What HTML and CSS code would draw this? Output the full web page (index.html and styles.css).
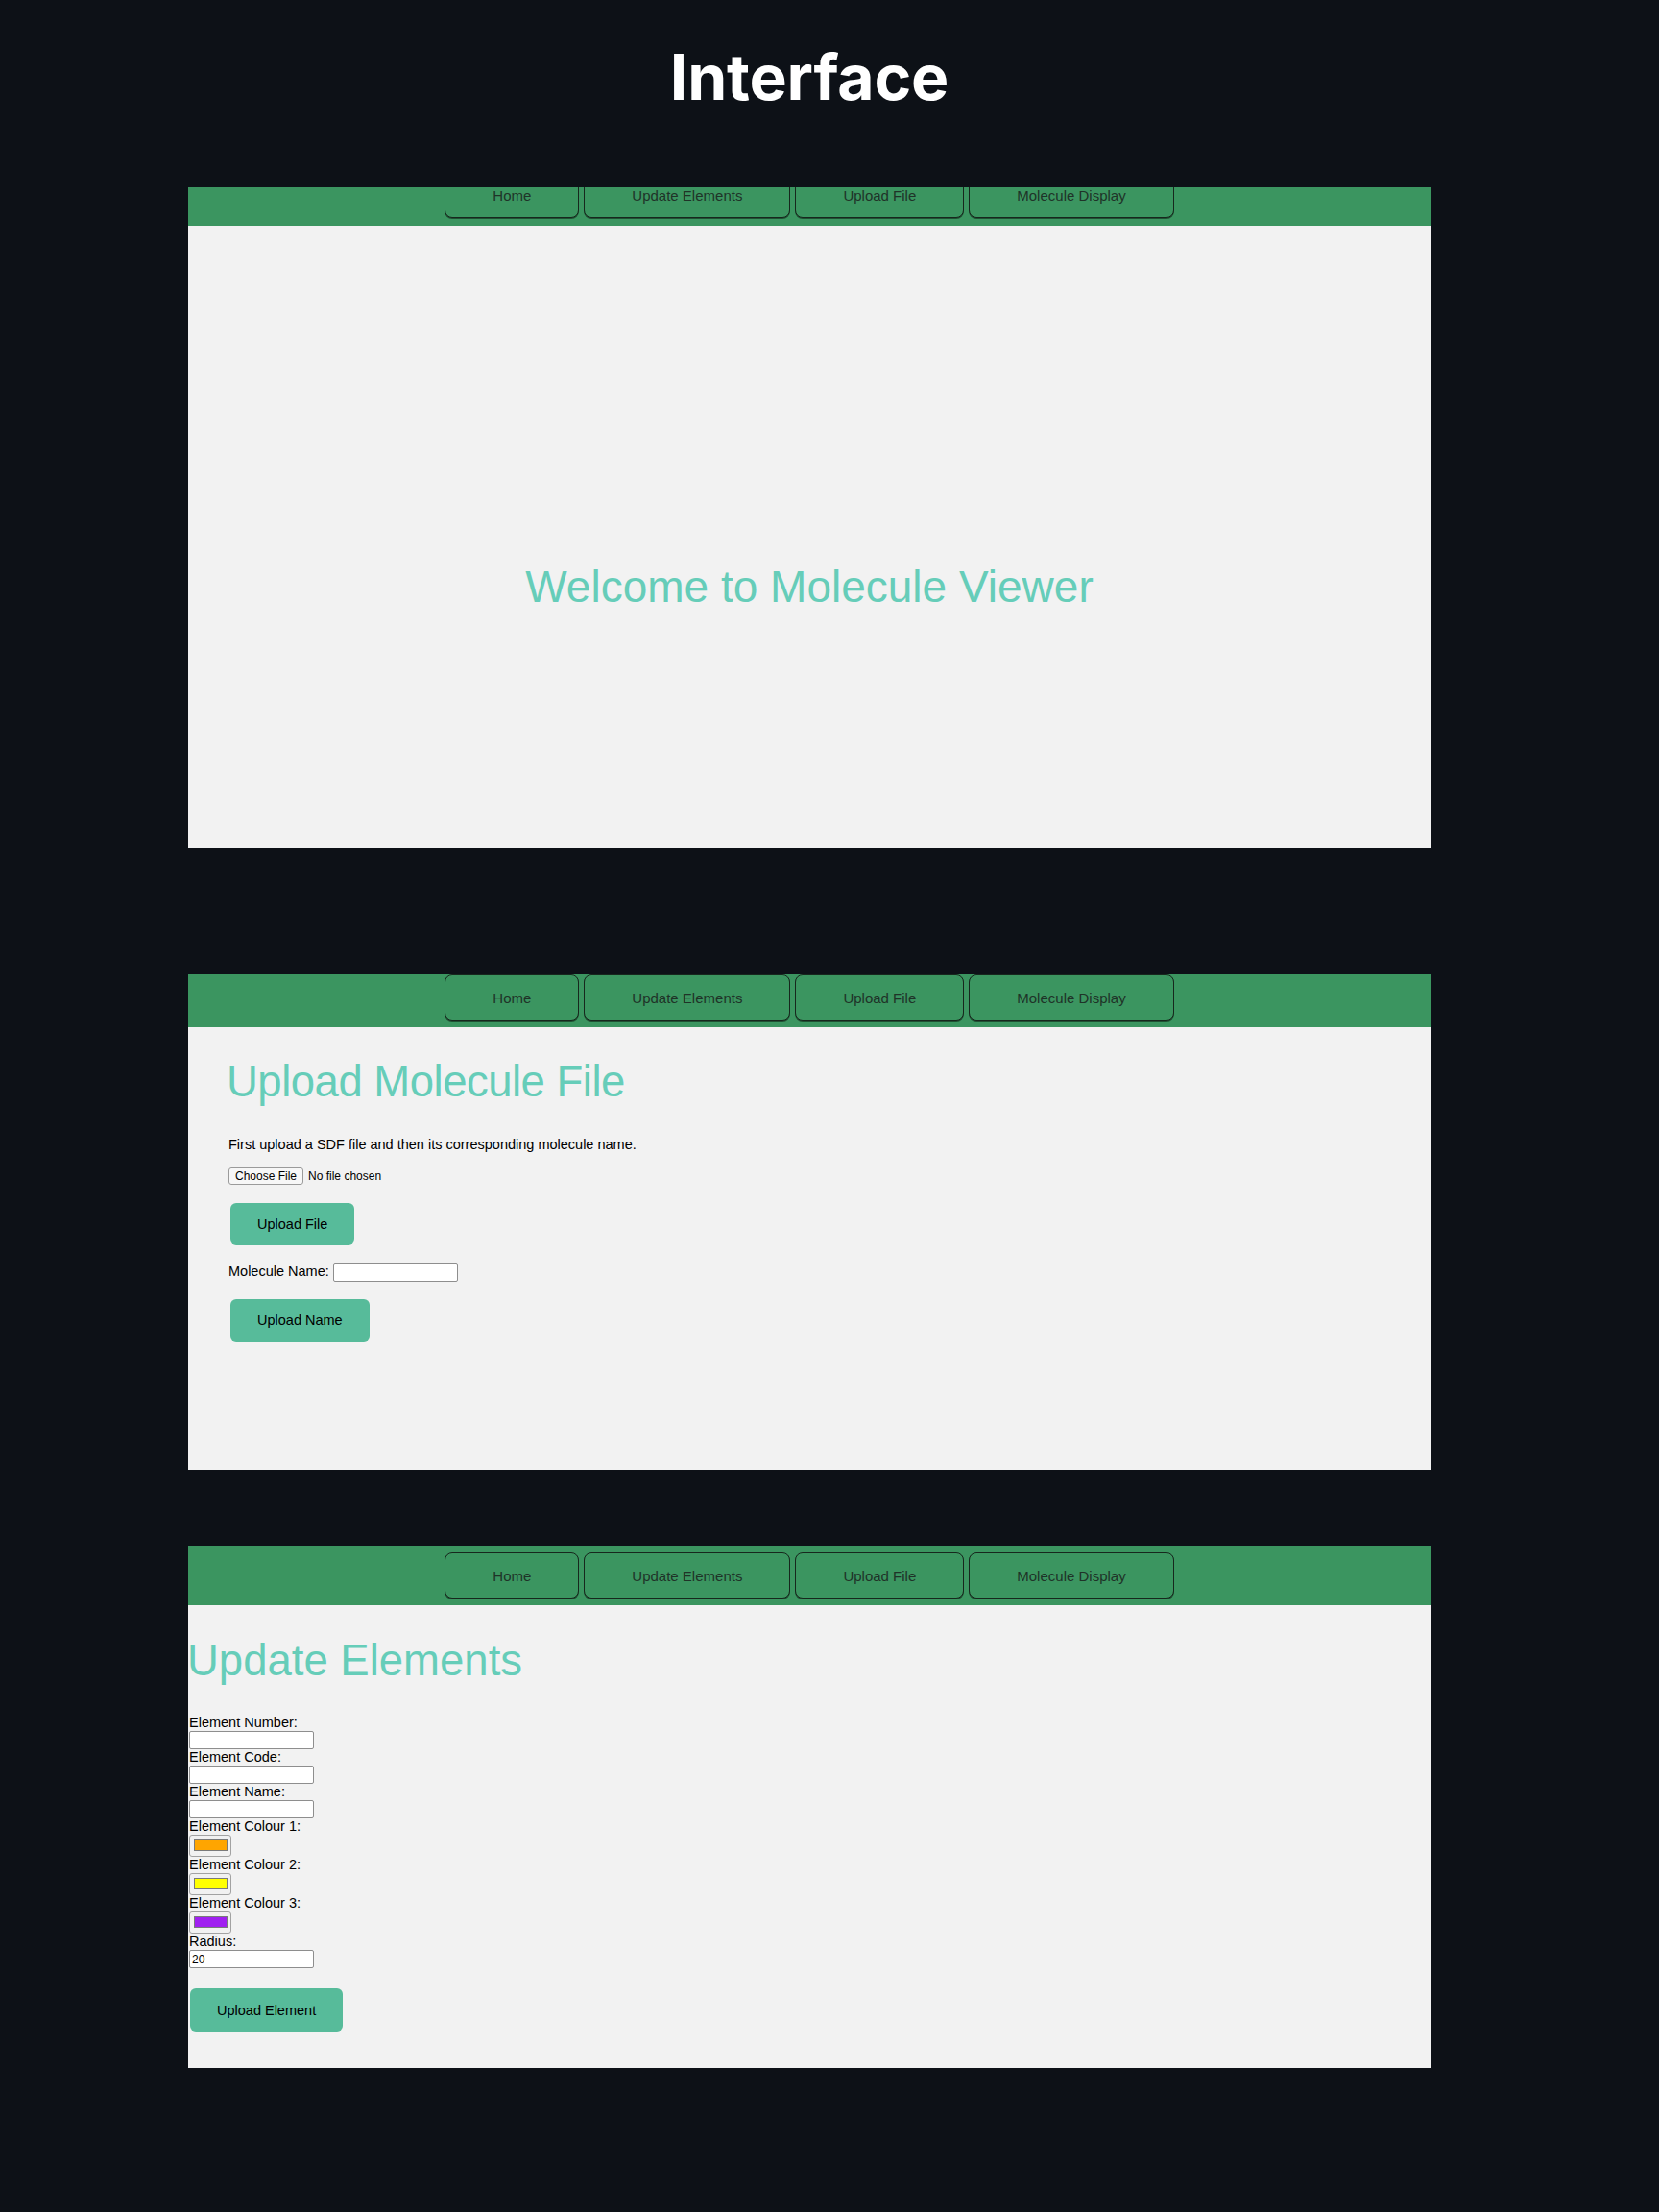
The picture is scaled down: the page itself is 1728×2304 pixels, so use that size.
FILE: index.html
```html
<!DOCTYPE html>
<html lang="en">
<head>
<meta charset="utf-8">
<title>Interface</title>
<link rel="stylesheet" href="styles.css">
</head>
<body>
<main class="page">
  <h1 class="page-title">Interface</h1>

  <section class="shot shot-home">
    <nav class="navbar navbar-home">
      <button class="nav-btn">Home</button>
      <button class="nav-btn">Update Elements</button>
      <button class="nav-btn">Upload File</button>
      <button class="nav-btn">Molecule Display</button>
    </nav>
    <div class="home-body">
      <h2 class="welcome">Welcome to Molecule Viewer</h2>
    </div>
  </section>

  <section class="shot shot-upload">
    <nav class="navbar navbar-upload">
      <button class="nav-btn">Home</button>
      <button class="nav-btn">Update Elements</button>
      <button class="nav-btn">Upload File</button>
      <button class="nav-btn">Molecule Display</button>
    </nav>
    <div class="upload-body">
      <h2 class="view-title upload-title">Upload Molecule File</h2>
      <p class="hint">First upload a SDF file and then its corresponding molecule name.</p>
      <input type="file" class="file-input">
      <button class="action-btn btn-file">Upload File</button>
      <label class="name-row">Molecule Name: <input type="text" class="text-input"></label>
      <button class="action-btn btn-name">Upload Name</button>
    </div>
  </section>

  <section class="shot shot-elements">
    <nav class="navbar navbar-elements">
      <button class="nav-btn">Home</button>
      <button class="nav-btn">Update Elements</button>
      <button class="nav-btn">Upload File</button>
      <button class="nav-btn">Molecule Display</button>
    </nav>
    <form class="elements-body">
      <h2 class="view-title elements-title">Update Elements</h2>
      <label class="field-label">Element Number:</label>
      <input type="text" class="text-input field-input">
      <label class="field-label">Element Code:</label>
      <input type="text" class="text-input field-input">
      <label class="field-label">Element Name:</label>
      <input type="text" class="text-input field-input">
      <label class="field-label">Element Colour 1:</label>
      <input type="color" class="color-input" value="#ffa500">
      <label class="field-label">Element Colour 2:</label>
      <input type="color" class="color-input" value="#ffff00">
      <label class="field-label">Element Colour 3:</label>
      <input type="color" class="color-input" value="#a020f0">
      <label class="field-label">Radius:</label>
      <input type="text" class="text-input field-input" value="20">
      <button type="button" class="action-btn btn-element">Upload Element</button>
    </form>
  </section>
</main>
</body>
</html>
```

FILE: styles.css
```css
html, body {
  margin: 0;
  padding: 0;
  background: #0d1117;
}

body {
  min-height: 2304px;
  font-family: "Liberation Sans", Arial, sans-serif;
  color: #000;
}

.page {
  width: 1294px;
  margin-left: 196px;
  padding-top: 40px;
  padding-bottom: 150px;
}

.page-title {
  margin: 0;
  font-family: "Inter", "Open Sans", sans-serif;
  font-weight: 700;
  font-size: 66px;
  line-height: 80px;
  color: #ffffff;
  text-align: center;
  letter-spacing: -0.2px;
}

.shot {
  background: #f2f2f2;
  display: flex;
  flex-direction: column;
  overflow: hidden;
}

.shot-home {
  margin-top: 75px;
  height: 688px;
}

.shot-upload {
  margin-top: 131px;
  height: 517px;
}

.shot-elements {
  margin-top: 79px;
  height: 544px;
}

/* navigation bar */
.navbar {
  background: #3b9560;
  display: flex;
  justify-content: center;
  align-items: flex-start;
  gap: 5px;
  flex-shrink: 0;
  overflow: hidden;
}

.navbar-home {
  height: 40px;
}

.navbar-home .nav-btn {
  margin-top: -16px;
}

.navbar-upload {
  padding: 1px 0 7px;
}

.navbar-elements {
  padding: 7px 0;
}

.nav-btn {
  height: 48px;
  padding: 0 49px;
  background: #3b9560;
  border: 1px solid #17271d;
  border-radius: 8px;
  box-shadow: 0 1px 0 rgba(10, 25, 15, 0.55);
  font-family: "Liberation Sans", Arial, sans-serif;
  font-size: 15px;
  color: #1f3328;
  white-space: nowrap;
  cursor: pointer;
}

/* home view */
.home-body {
  flex: 1;
  padding-top: 350px;
}

.welcome {
  margin: 0;
  font-family: "Liberation Sans", Arial, sans-serif;
  font-weight: 400;
  font-size: 46px;
  line-height: 52px;
  color: #66cdb9;
  text-align: center;
}

/* shared headings */
.view-title {
  margin: 0;
  font-family: "Liberation Sans", Arial, sans-serif;
  font-weight: 400;
  line-height: 52px;
  color: #66cdb9;
}

/* upload view */
.upload-body {
  display: flex;
  flex-direction: column;
  align-items: flex-start;
  padding-left: 42px;
}

.upload-title {
  font-size: 45.5px;
  letter-spacing: -0.5px;
  margin-top: 31px;
  margin-left: -2px;
}

.hint {
  margin: 31px 0 0;
  font-size: 14.5px;
  line-height: 17px;
}

.file-input {
  margin-top: 15px;
  font-family: "Liberation Sans", Arial, sans-serif;
  font-size: 12px;
  color: #000;
  height: 18px;
}

.file-input::file-selector-button {
  height: 18px;
  padding: 0 6px;
  margin-right: 5px;
  border: 1px solid #9b9b9b;
  border-radius: 3px;
  background: #f7f7f7;
  font-family: "Liberation Sans", Arial, sans-serif;
  font-size: 12px;
  color: #000;
}

.action-btn {
  height: 45px;
  padding: 0 28px;
  border: none;
  border-radius: 6px;
  background: #57bb9a;
  font-family: "Liberation Sans", Arial, sans-serif;
  font-size: 14.5px;
  color: #000;
  cursor: pointer;
}

.btn-file {
  margin-top: 19px;
  margin-left: 2px;
  height: 44px;
}

.name-row {
  margin-top: 18px;
  font-size: 14.5px;
  line-height: 19px;
}

.text-input {
  box-sizing: border-box;
  width: 130px;
  height: 19px;
  padding: 0 2px;
  border: 1px solid #8e8e8e;
  border-radius: 2px;
  background: #ffffff;
  font-family: "Liberation Sans", Arial, sans-serif;
  font-size: 12px;
  color: #000;
  vertical-align: baseline;
}

.btn-name {
  margin-top: 18px;
  margin-left: 2px;
}

/* elements view */
.elements-body {
  display: flex;
  flex-direction: column;
  align-items: flex-start;
  padding-left: 1px;
  margin: 0;
}

.elements-title {
  font-size: 45.5px;
  margin-top: 32px;
  margin-left: -2px;
  margin-bottom: 30px;
}

.field-label {
  display: block;
  font-size: 14.5px;
  line-height: 17px;
}

.field-input {
  display: block;
}

.color-input {
  display: block;
  box-sizing: border-box;
  width: 44px;
  height: 23px;
  padding: 0;
  border: 1px solid #a2a2a2;
  border-radius: 3px;
  background: #f1f1f1;
  cursor: pointer;
}

.color-input::-webkit-color-swatch-wrapper {
  padding: 4px 3px 5px 4px;
}

.color-input::-webkit-color-swatch {
  border: 1px solid #7a7a7a;
  border-radius: 0;
}

.btn-element {
  margin-top: 21px;
  margin-left: 1px;
}
```
